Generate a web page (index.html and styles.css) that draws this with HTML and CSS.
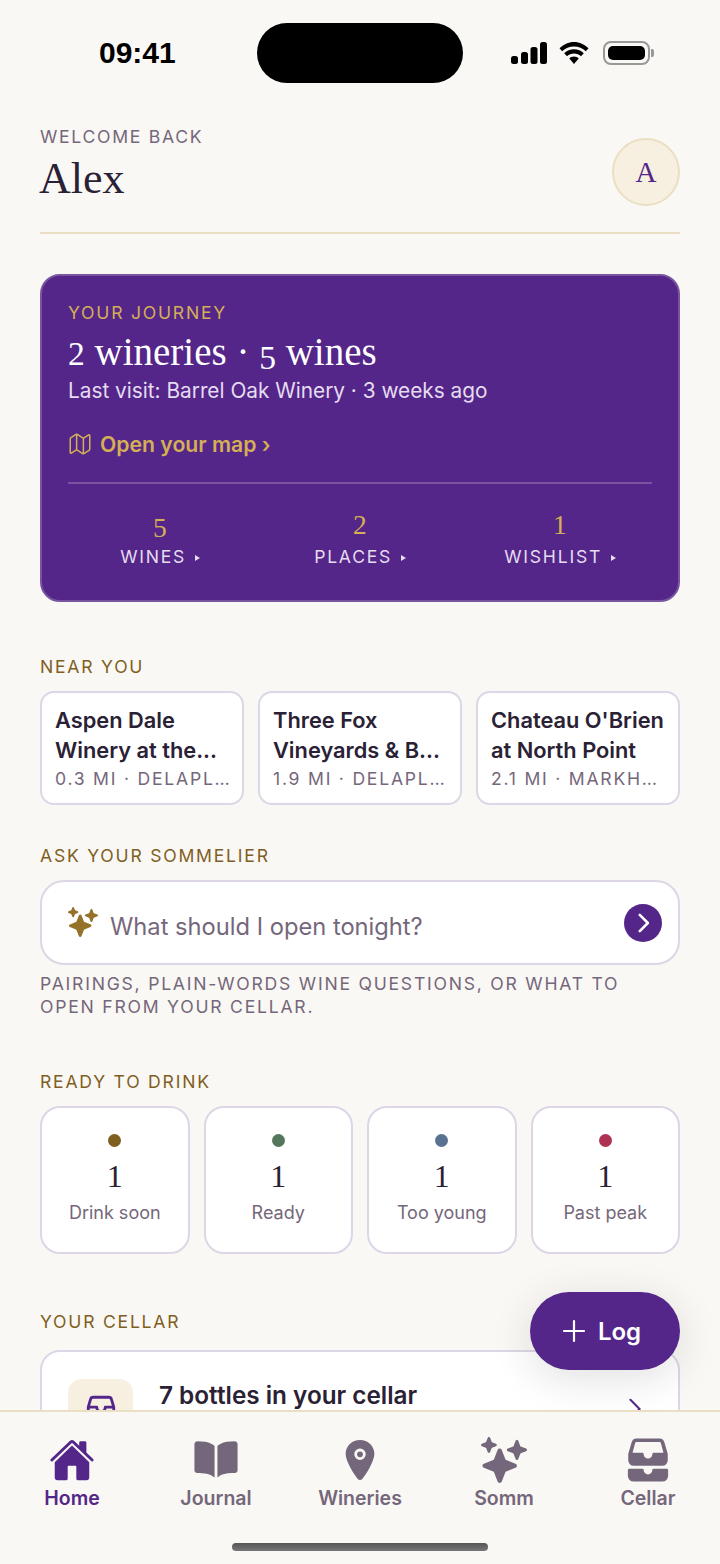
FILE: index.html
```html
<!DOCTYPE html>
<html lang="en">
<head>
    <meta charset="UTF-8">
    <meta name="viewport" content="width=device-width, initial-scale=1.0">
    <title>Home</title>
    <link rel="stylesheet" href="styles.css">
</head>
<body>
<div class="app">
    <div class="status-bar">
        <span class="time">09:41</span>
        <div class="status-icons">
            <svg class="ico-signal" viewBox="0 0 36 22"><rect x="0" y="14" width="7" height="8" rx="2.5"/><rect x="10" y="10" width="7" height="12" rx="2.5"/><rect x="19.500" y="5" width="7" height="17" rx="2.5"/><rect x="29" y="0" width="7" height="22" rx="2.5"/></svg>
            <svg class="ico-wifi" viewBox="0 0 32 22"><path d="M16 4.500c4.600 0 8.700 1.800 11.800 4.800l2.700-3C26.700 2.500 21.600 0 16 0S5.300 2.500 1.500 6.300l2.700 3C7.300 6.300 11.400 4.500 16 4.500z"/><path d="M16 11.500c2.700 0 5.100 1 7 2.800l2.800-3.100C23.200 8.700 19.800 7.200 16 7.200s-7.200 1.500-9.800 4l2.800 3.100c1.900-1.800 4.300-2.800 7-2.800z"/><path d="M16 14.600c-1.800 0-3.400.7-4.700 1.900L16 22l4.700-5.500c-1.300-1.200-2.900-1.900-4.700-1.900z"/></svg>
            <div class="battery"><span class="battery-level"></span></div>
            <span class="battery-cap"></span>
        </div>
    </div>
    <div class="island"></div>

    <main class="content">
        <header class="greeting">
            <div class="greeting-text">
                <div class="welcome">WELCOME BACK</div>
                <h1 class="name">Alex</h1>
            </div>
            <div class="avatar">A</div>
        </header>

        <section class="journey">
            <div class="journey-label">YOUR JOURNEY</div>
            <h2 class="journey-title"><span class="old">2</span> wineries · <span class="old low">5</span> wines</h2>
            <p class="journey-sub">Last visit: Barrel Oak Winery · 3 weeks ago</p>
            <a class="map-link">
                <svg class="ico-map" viewBox="0 0 512 512"><path d="M313.27 124.64L198.73 51.36a32 32 0 00-29.28.35L56.51 127.49A16 16 0 0048 141.63v295.8a16 16 0 0023.49 14.14l97.82-63.79a32 32 0 0129.5-.24l111.86 73a32 32 0 0029.27-.11l115.43-75.94a16 16 0 008.63-14.2V74.57a16 16 0 00-23.49-14.14l-98 63.86a32 32 0 01-29.74.35zM328 128v336M184 48v336"/></svg>
                Open your map ›
            </a>
            <div class="journey-stats">
                <div class="stat"><div class="stat-num"><span class="old low">5</span></div><div class="stat-label">WINES <i class="tri"></i></div></div>
                <div class="stat"><div class="stat-num"><span class="old">2</span></div><div class="stat-label">PLACES <i class="tri"></i></div></div>
                <div class="stat"><div class="stat-num"><span class="old">1</span></div><div class="stat-label">WISHLIST <i class="tri"></i></div></div>
            </div>
        </section>

        <h3 class="section-title near-title">NEAR YOU</h3>
        <div class="near-list">
            <div class="near-card">
                <div class="near-name">Aspen Dale</div>
                <div class="near-name">Winery at the...</div>
                <div class="near-meta">0.3 MI · DELAPL…</div>
            </div>
            <div class="near-card">
                <div class="near-name">Three Fox</div>
                <div class="near-name">Vineyards &amp; B...</div>
                <div class="near-meta">1.9 MI · DELAPL…</div>
            </div>
            <div class="near-card">
                <div class="near-name">Chateau O'Brien</div>
                <div class="near-name">at North Point</div>
                <div class="near-meta">2.1 MI · MARKH…</div>
            </div>
        </div>

        <h3 class="section-title somm-title">ASK YOUR SOMMELIER</h3>
        <div class="ask-box">
            <svg class="ico-sparkle" viewBox="0 0 512 512"><use href="#sparkles"/></svg>
            <span class="ask-text">What should I open tonight?</span>
            <span class="ask-send">
                <svg viewBox="0 0 24 24"><path d="M9 4.500 16.500 12 9 19.500"/></svg>
            </span>
        </div>
        <p class="ask-hint">PAIRINGS, PLAIN-WORDS WINE QUESTIONS, OR WHAT TO OPEN FROM YOUR CELLAR.</p>

        <h3 class="section-title ready-title">READY TO DRINK</h3>
        <div class="ready-list">
            <div class="ready-card"><span class="dot dot-soon"></span><div class="ready-num">1</div><div class="ready-label">Drink soon</div></div>
            <div class="ready-card"><span class="dot dot-ready"></span><div class="ready-num">1</div><div class="ready-label">Ready</div></div>
            <div class="ready-card"><span class="dot dot-young"></span><div class="ready-num">1</div><div class="ready-label">Too young</div></div>
            <div class="ready-card"><span class="dot dot-past"></span><div class="ready-num">1</div><div class="ready-label">Past peak</div></div>
        </div>

        <h3 class="section-title cellar-title">YOUR CELLAR</h3>
        <div class="cellar-card">
            <div class="cellar-icon">
                <svg viewBox="0 0 24 24"><path d="M6.500 3h11a2 2 0 0 1 1.900 1.500L21 10v4a2 2 0 0 1-2 2H5a2 2 0 0 1-2-2v-4l1.600-5.500A2 2 0 0 1 6.500 3z"/><path d="M3 10h6a3 3 0 0 0 6 0h6"/></svg>
            </div>
            <div class="cellar-text">7 bottles in your cellar</div>
            <svg class="cellar-arrow" viewBox="0 0 24 24"><path d="M7 2l10 10L7 22"/></svg>
        </div>
    </main>

    <button class="fab">
        <svg viewBox="0 0 24 24"><path d="M12 2v20M2 12h20"/></svg>
        Log
    </button>

    <nav class="tabbar">
        <div class="tab active">
            <svg viewBox="0 0 512 512"><path d="M261.56 101.28a8 8 0 00-11.06 0L66.4 277.15a8 8 0 00-2.47 5.79L63.9 448a32 32 0 0032 32H192a16 16 0 0016-16V328a8 8 0 018-8h80a8 8 0 018 8v136a16 16 0 0016 16h96.06a32 32 0 0032-32V282.94a8 8 0 00-2.47-5.79z"/><path d="M490.91 244.15l-74.8-71.56V64a16 16 0 00-16-16h-48a16 16 0 00-16 16v32l-57.92-55.38C272.77 35.14 264.71 32 256 32c-8.68 0-16.72 3.14-22.14 8.63l-212.7 203.5c-6.22 6-7 15.87-1.34 22.37A16 16 0 0043 267.56L250.5 69.28a8 8 0 0111.06 0l207.52 198.28a16 16 0 0022.59-.44c6.14-6.36 5.63-16.86-.76-22.97z"/></svg>
            <span>Home</span>
        </div>
        <div class="tab">
            <svg viewBox="0 0 512 512"><path d="M202.24 74C166.11 56.75 115.61 48.3 48 48a31.36 31.36 0 00-17.92 5.33A32 32 0 0016 79.9V366c0 19.34 13.76 33.93 32 33.93 71.07 0 142.36 6.64 185.06 47a4.11 4.11 0 006.94-3V106.82a15.89 15.89 0 00-5.46-12A143 143 0 00202.24 74zM481.92 53.3A31.33 31.33 0 00464 48c-67.61.3-118.11 8.63-154.24 26a143.31 143.31 0 00-32.31 20.78 15.93 15.93 0 00-5.45 12v337.13a3.93 3.93 0 006.68 2.81c25.67-25.5 70.72-46.82 185.36-46.81a32 32 0 0032-32v-288a32 32 0 00-14.12-26.61z"/></svg>
            <span>Journal</span>
        </div>
        <div class="tab">
            <svg viewBox="0 0 512 512"><circle cx="256" cy="192" r="32"/><path d="M256 32c-88.22 0-160 68.65-160 153 0 40.17 18.31 93.59 54.42 158.780 29 52.340 62.55 99.670 80 123.220a31.750 31.750 0 0051.160 0c17.420-23.550 51-70.880 80-123.220C397.690 278.610 416 225.190 416 185c0-84.350-71.780-153-160-153zm0 224a64 64 0 1164-64 64.070 64.070 0 01-64 64z"/></svg>
            <span>Wineries</span>
        </div>
        <div class="tab">
            <svg viewBox="0 0 512 512">
                <defs>
                    <g id="sparkles">
                        <path d="M208 512a24.84 24.84 0 01-23.34-16l-39.84-103.6a16.06 16.06 0 00-9.19-9.19L32 343.34a25 25 0 010-46.68l103.6-39.84a16.06 16.06 0 009.19-9.19L184.66 144a25 25 0 0146.68 0l39.84 103.6a16.06 16.06 0 009.19 9.19l103 39.63a25.49 25.49 0 0116.63 24.1 24.82 24.82 0 01-16 22.82l-103.6 39.84a16.06 16.06 0 00-9.19 9.19L231.34 496A24.84 24.84 0 01208 512z"/>
                        <path d="M88 176a14.67 14.67 0 01-13.69-9.4l-16.86-43.84a7.28 7.28 0 00-4.21-4.21L9.4 101.69a14.67 14.67 0 010-27.38l43.84-16.86a7.31 7.31 0 004.21-4.21L74.16 9.79A15 15 0 0186.23.11a14.67 14.67 0 0115.46 9.29l16.86 43.84a7.31 7.31 0 004.21 4.21l43.84 16.86a14.67 14.67 0 010 27.38l-43.84 16.86a7.28 7.28 0 00-4.21 4.21l-16.86 43.84A14.67 14.67 0 0188 176z"/>
                        <path d="M400 256a16 16 0 01-14.93-10.26l-22.84-59.37a8 8 0 00-4.6-4.6l-59.37-22.84a16 16 0 010-29.86l59.37-22.84a8 8 0 004.6-4.6l22.67-58.95a16.45 16.45 0 0113.17-10.57 16 16 0 0116.86 10.15l22.84 59.37a8 8 0 004.6 4.6l59.37 22.84a16 16 0 010 29.86l-59.37 22.84a8 8 0 00-4.6 4.6l-22.84 59.37A16 16 0 01400 256z"/>
                    </g>
                </defs>
                <use href="#sparkles"/>
            </svg>
            <span>Somm</span>
        </div>
        <div class="tab">
            <svg viewBox="0 0 512 512"><path fill-rule="evenodd" d="M128 16H384a56 56 0 0 1 54 42L476 190v70a60 60 0 0 1-60 60H96a60 60 0 0 1-60-60V190L74 58a56 56 0 0 1 54-42zM128 56a16 16 0 0 0-15 12L84 176H192a16 16 0 0 1 16 16a48 48 0 0 0 96 0a16 16 0 0 1 16-16H428L399 68a16 16 0 0 0-15-12z"/><path d="M464 352H320a16 16 0 00-16 16 48 48 0 01-96 0 16 16 0 00-16-16H48a16 16 0 00-16 16v64a64.070 64.070 0 0064 64h320a64.070 64.070 0 0064-64v-64a16 16 0 00-16-16z"/></svg>
            <span>Cellar</span>
        </div>
        <div class="home-bar"></div>
    </nav>
</div>
</body>
</html>
```
FILE: styles.css
```css
* {
    box-sizing: border-box;
}

html, body {
    margin: 0;
    height: 100%;
    overflow: hidden;
}

body {
    font-family: Inter, "Noto Sans", sans-serif;
    background-color: #faf8f4;
    color: #2a2135;
}

h1, h2, h3, p {
    margin: 0;
    font-weight: normal;
}

.app {
    position: relative;
    display: flex;
    flex-direction: column;
    width: 720px;
    height: 1564px;
}

/* status bar */
.status-bar {
    flex: none;
    display: flex;
    justify-content: space-between;
    align-items: center;
    height: 106px;
    padding: 0 66px 0 99px;
    color: #000;
}

.time {
    font-family: "Liberation Sans", Arial, sans-serif;
    font-size: 30px;
    font-weight: bold;
}

.status-icons {
    display: flex;
    align-items: center;
}

.ico-signal {
    width: 36px;
    height: 22px;
    fill: #000;
}

.ico-wifi {
    width: 32px;
    height: 22px;
    margin-left: 11px;
    fill: #000;
}

.battery {
    width: 47px;
    height: 24px;
    margin-left: 13px;
    padding: 3px;
    border: 2px solid #999;
    border-radius: 8px;
}

.battery-level {
    display: block;
    height: 100%;
    background-color: #000;
    border-radius: 5px;
}

.battery-cap {
    width: 3px;
    height: 8px;
    margin-left: 1px;
    background-color: #999;
    border-radius: 0 2px 2px 0;
}

.island {
    position: absolute;
    top: 23px;
    left: 257px;
    width: 206px;
    height: 60px;
    background-color: #000;
    border-radius: 30px;
}

/* page content */
.content {
    flex: 1;
    min-height: 0;
    overflow: hidden;
    padding: 20px 40px 0;
}

.greeting {
    display: flex;
    justify-content: space-between;
    align-items: flex-end;
    padding-bottom: 26px;
    border-bottom: 2px solid #eadfc2;
}

.greeting-text {
    margin-bottom: 1px;
}

.welcome {
    font-size: 17.6px;
    line-height: 22px;
    letter-spacing: 1.7px;
    color: #75677b;
}

.name {
    font-family: "Liberation Serif", serif;
    font-size: 44px;
    line-height: 48px;
    margin: 7px 0 2px -1px;
}

.avatar {
    display: flex;
    align-items: center;
    justify-content: center;
    width: 68px;
    height: 68px;
    background-color: #f7f0e0;
    border: 2px solid #eadfc2;
    border-radius: 50%;
    font-family: "Liberation Serif", serif;
    font-size: 29px;
    color: #54268a;
}

/* hero card */
.journey {
    margin-top: 40px;
    height: 328px;
    padding: 25px 26px 0;
    background-color: #54268a;
    border: 2px solid #7a559f;
    border-radius: 20px;
    color: #fff;
}

.journey-label {
    font-size: 17.6px;
    line-height: 24px;
    letter-spacing: 1.76px;
    color: #d4af55;
}

.journey-title {
    font-family: "Liberation Serif", serif;
    font-size: 39px;
    line-height: 44px;
    margin-top: 5px;
}

.old {
    font-size: .86em;
}

.low {
    position: relative;
    top: .12em;
}

.journey-sub {
    margin-top: 1px;
    font-size: 20.8px;
    line-height: 28px;
    color: #e5dcf0;
}

.map-link {
    display: flex;
    align-items: center;
    gap: 8px;
    margin-top: 25px;
    font-size: 21.2px;
    font-weight: 600;
    line-height: 28px;
    color: #d4af55;
}

.ico-map {
    width: 24px;
    height: 24px;
    fill: none;
    stroke: #d4af55;
    stroke-width: 32;
    stroke-linejoin: round;
}

.journey-stats {
    display: grid;
    grid-template-columns: repeat(3, 1fr);
    gap: 16px;
    margin-top: 24px;
    padding-top: 20px;
    border-top: 2px solid #7a559f;
    text-align: center;
}

.stat-num {
    margin-bottom: 1px;
    font-family: "Liberation Serif", serif;
    font-size: 32px;
    line-height: 39px;
    color: #d4af55;
}

.stat-label {
    font-size: 17.6px;
    line-height: 24px;
    letter-spacing: 1.76px;
    color: #e5dcf0;
}

.tri {
    display: inline-block;
    width: 0;
    height: 0;
    margin-left: 2px;
    vertical-align: 2px;
    border-left: 5px solid #e5dcf0;
    border-top: 3px solid transparent;
    border-bottom: 3px solid transparent;
}

/* sections */
.section-title {
    font-size: 17.6px;
    line-height: 24px;
    letter-spacing: 1.76px;
    color: #7f5f1f;
}

.near-title {
    margin-top: 53px;
}

.near-list {
    display: grid;
    grid-template-columns: repeat(3, 1fr);
    gap: 14px;
    margin-top: 12px;
}

.near-card {
    height: 114px;
    padding: 12px 12px 12px 13px;
    background-color: #fff;
    border: 2px solid #ddd6e6;
    border-radius: 14px;
    min-width: 0;
}

.near-name {
    white-space: nowrap;
    font-size: 21.8px;
    font-weight: 600;
    line-height: 30px;
}

.near-meta {
    white-space: nowrap;
    margin-top: 2px;
    font-size: 17.6px;
    line-height: 24px;
    letter-spacing: 1.76px;
    color: #75677b;
}

.somm-title {
    margin-top: 39px;
}

.ask-box {
    display: flex;
    align-items: center;
    height: 85px;
    margin-top: 12px;
    padding: 0 16px 0 26px;
    background-color: #fff;
    border: 2px solid #ddd6e6;
    border-radius: 24px;
}

.ico-sparkle {
    width: 30px;
    height: 30px;
    margin-bottom: 2px;
    fill: #94722a;
}

.ask-text {
    flex: 1;
    margin-left: 12px;
    margin-top: 8px;
    font-size: 23.7px;
    color: #75677b;
}

.ask-send {
    display: flex;
    align-items: center;
    justify-content: center;
    width: 38px;
    height: 38px;
    background-color: #54268a;
    border-radius: 50%;
}

.ask-send svg {
    width: 26px;
    height: 26px;
    fill: none;
    stroke: #fff;
    stroke-width: 2.4;
    stroke-linecap: round;
    stroke-linejoin: round;
}

.ask-hint {
    margin-top: 7px;
    font-size: 17.6px;
    line-height: 23px;
    letter-spacing: 1.76px;
    color: #75677b;
}

.ready-title {
    margin-top: 52px;
}

.ready-list {
    display: grid;
    grid-template-columns: repeat(4, 1fr);
    gap: 14px;
    margin-top: 12px;
}

.ready-card {
    display: flex;
    flex-direction: column;
    align-items: center;
    height: 148px;
    padding-top: 26px;
    background-color: #fff;
    border: 2px solid #ddd6e6;
    border-radius: 20px;
}

.dot {
    width: 13px;
    height: 13px;
    border-radius: 50%;
}

.dot-soon { background-color: #7f5f1f; }
.dot-ready { background-color: #54775c; }
.dot-young { background-color: #5a7291; }
.dot-past { background-color: #ae3352; }

.ready-num {
    margin-top: 11px;
    font-family: "Liberation Serif", serif;
    font-size: 32px;
    line-height: 36px;
}

.ready-label {
    margin-top: 7px;
    font-size: 18px;
    line-height: 24px;
    color: #75677b;
}

.cellar-title {
    margin-top: 56px;
}

.cellar-card {
    display: flex;
    align-items: flex-start;
    height: 140px;
    margin-top: 16px;
    padding: 27px 32px 0 26px;
    background-color: #fff;
    border: 2px solid #ddd6e6;
    border-radius: 20px;
}

.cellar-icon {
    flex: none;
    display: flex;
    justify-content: center;
    width: 65px;
    height: 65px;
    padding-top: 14px;
    background-color: #f7f0e0;
    border-radius: 14px;
}

.cellar-icon svg {
    width: 34px;
    height: 34px;
    fill: none;
    stroke: #54268a;
    stroke-width: 2;
    stroke-linejoin: round;
}

.cellar-text {
    flex: 1;
    margin-left: 26px;
    font-size: 24.3px;
    font-weight: 600;
    line-height: 32px;
}

.cellar-arrow {
    width: 22px;
    height: 38px;
    margin-top: 11px;
    fill: none;
    stroke: #54268a;
    stroke-width: 2.2;
    stroke-linecap: round;
}

/* log button */
.fab {
    position: absolute;
    top: 1292px;
    right: 40px;
    display: flex;
    align-items: center;
    justify-content: center;
    gap: 12px;
    width: 150px;
    height: 78px;
    padding: 0 7px 0 0;
    background-color: #54268a;
    border: none;
    border-radius: 39px;
    box-shadow: 0 8px 40px rgba(42, 33, 53, .14);
    font-family: Inter, sans-serif;
    font-size: 24px;
    font-weight: 600;
    color: #fff;
}

.fab svg {
    width: 24px;
    height: 24px;
    fill: none;
    stroke: #fff;
    stroke-width: 2.200;
    stroke-linecap: round;
}

/* bottom tabs */
.tabbar {
    position: relative;
    z-index: 1;
    flex: none;
    display: grid;
    grid-template-columns: repeat(5, 1fr);
    height: 154px;
    padding-top: 25px;
    background-color: #faf8f4;
    border-top: 2px solid #eadfc2;
}

.tab {
    display: flex;
    flex-direction: column;
    align-items: center;
    height: 80px;
    font-size: 19.5px;
    font-weight: 600;
    color: #75677b;
}

.tab svg {
    width: 46px;
    height: 46px;
    fill: #75677b;
}

.tab span {
    margin-top: 3px;
    line-height: 24px;
}

.tab.active {
    color: #54268a;
}

.tab.active svg {
    fill: #54268a;
}

.home-bar {
    position: absolute;
    left: 232px;
    bottom: 13px;
    width: 256px;
    height: 8px;
    background: linear-gradient(#555, #777);
    border-radius: 4px;
}
```
